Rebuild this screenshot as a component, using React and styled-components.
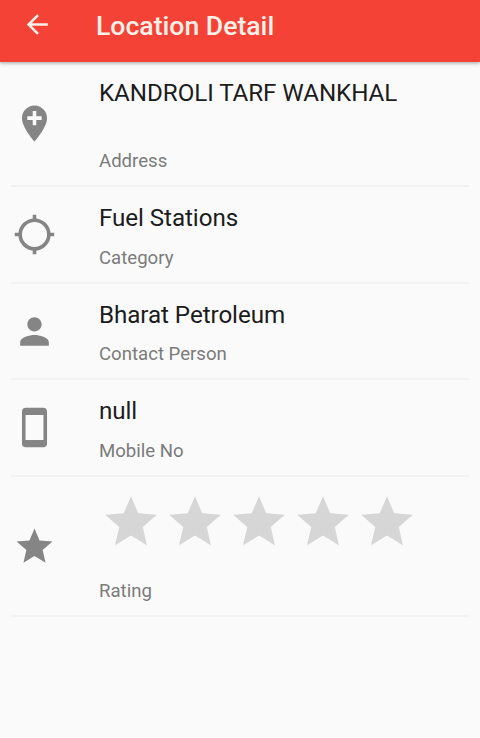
import React from "react";
import styled, { createGlobalStyle } from "styled-components";
import { MdAddLocation, MdPerson, MdStayCurrentPortrait } from "react-icons/md";

const GlobalStyle = createGlobalStyle`
  * {
    box-sizing: border-box;
  }

  body {
    margin: 0;
    background: #fafafa;
    font-family: Roboto, "Liberation Sans", sans-serif;
  }
`;

const Screen = styled.div`
  height: 738px;
  overflow: hidden;
  background: #fafafa;
`;

const Toolbar = styled.header`
  display: flex;
  align-items: flex-start;
  height: 62px;
  padding-left: 23px;
  background: #f44336;
  box-shadow: 0 1px 4px rgba(0, 0, 0, 0.36);
  color: #fff0e8;
`;

const BackButton = styled.button`
  display: flex;
  width: 73px;
  margin: 10px 0 0;
  padding: 0;
  border: 0;
  background: none;
  color: inherit;
`;

const Title = styled.h1`
  margin: 10px 0 0;
  font-size: 26.6px;
  font-weight: 500;
  line-height: 32px;
  white-space: nowrap;
`;

const List = styled.ul`
  margin: 0;
  padding: 0 11px;
  list-style: none;
`;

const Row = styled.li`
  display: flex;
  align-items: center;
  height: ${({ height }) => height}px;
  border-bottom: 2px solid #f2f2f2;
`;

const IconBox = styled.div`
  display: flex;
  flex: 0 0 88px;
  padding-left: 2px;
  color: #858585;
`;

const Texts = styled.div`
  display: flex;
  flex-direction: column;
  justify-content: space-between;
  height: 100%;
  padding: ${({ top }) => top}px 0 12px;
`;

const Value = styled.span`
  color: #1c1c1c;
  font-size: 24.2px;
  letter-spacing: -0.07px;
  line-height: 30px;
  white-space: nowrap;
`;

const Label = styled.span`
  color: #7b7b7b;
  font-size: 18.6px;
  line-height: 24px;
`;

const Stars = styled.div`
  display: flex;
  gap: 2px;
  padding-left: 1px;
  color: #d6d6d6;
`;

const BackIcon = () => (
  <svg width="29" height="29" viewBox="0 0 24 24" fill="none" stroke="currentColor" strokeWidth="2.1">
    <path d="M20.5 12H4.8M12.4 4.2L4.6 12l7.8 7.8" />
  </svg>
);

const TargetIcon = ({ size }) => (
  <svg width={size} height={size} viewBox="0 0 24 24" fill="none" stroke="currentColor" strokeWidth="2">
    <circle cx="12" cy="12" r="8" />
    <path d="M12 1v3M12 20v3M1 12h3M20 12h3" />
  </svg>
);

const StarIcon = ({ size }) => (
  <svg width={size} height={size} viewBox="0 0 24 24" fill="currentColor">
    <path d="M12 17.27L18.18 21l-1.64-7.03L22 9.24l-7.19-.61L12 2 9.19 8.63 2 9.24l5.46 4.73L5.82 21z" />
  </svg>
);

const ICON_SIZE = 43;

const details = [
  { label: "Address", value: "KANDROLI TARF WANKHAL", icon: MdAddLocation, height: 125 },
  { label: "Category", value: "Fuel Stations", icon: TargetIcon, height: 97 },
  { label: "Contact Person", value: "Bharat Petroleum", icon: MdPerson, height: 96 },
  { label: "Mobile No", value: "null", icon: MdStayCurrentPortrait, height: 97 },
];

const DetailRow = ({ item }) => {
  const Icon = item.icon;
  return (
    <Row height={item.height}>
      <IconBox>
        <Icon size={ICON_SIZE} />
      </IconBox>
      <Texts top={16}>
        <Value>{item.value}</Value>
        <Label>{item.label}</Label>
      </Texts>
    </Row>
  );
};

const App = () => {
  return (
    <>
      <GlobalStyle />
      <Screen>
        <Toolbar>
          <BackButton aria-label="Back">
            <BackIcon />
          </BackButton>
          <Title>Location Detail</Title>
        </Toolbar>
        <List>
          {details.map((item) => (
            <DetailRow item={item} key={item.label} />
          ))}
          <Row height={140}>
            <IconBox>
              <StarIcon size={ICON_SIZE} />
            </IconBox>
            <Texts top={14}>
              <Stars>
                {[1, 2, 3, 4, 5].map((n) => (
                  <StarIcon size={62} key={n} />
                ))}
              </Stars>
              <Label>Rating</Label>
            </Texts>
          </Row>
        </List>
      </Screen>
    </>
  );
};

export default App;
